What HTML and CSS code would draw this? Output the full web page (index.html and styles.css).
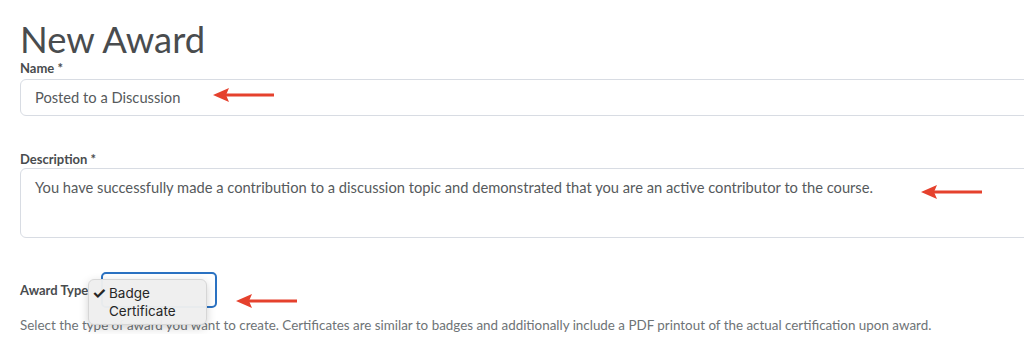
FILE: index.html
```html
<!DOCTYPE html>
<html lang="en">
<head>
  <meta charset="UTF-8" />
  <title>New Award</title>
  <link rel="stylesheet" href="styles.css">
</head>
<body>
  <main class="page">
    <h1 class="page-title">New Award</h1>

    <div class="field field-name">
      <label class="field-label">Name *</label>
      <div class="text-input">Posted to a Discussion</div>
      <svg class="arrow arrow-name" width="62" height="16" viewBox="0 0 62 16">
        <polygon points="0,8 16,1 13,8 16,15" />
        <rect x="13" y="6.5" width="48" height="3" />
      </svg>
    </div>

    <div class="field field-desc">
      <label class="field-label">Description *</label>
      <div class="text-area">You have successfully made a contribution to a discussion topic and demonstrated that you are an active contributor to the course.</div>
      <svg class="arrow arrow-desc" width="62" height="16" viewBox="0 0 62 16">
        <polygon points="0,8 16,1 13,8 16,15" />
        <rect x="13" y="6.5" width="48" height="3" />
      </svg>
    </div>

    <div class="field field-type">
      <div class="type-row">
        <label class="field-label">Award Type</label>
        <div class="select-box"></div>
        <svg class="arrow arrow-type" width="62" height="16" viewBox="0 0 62 16">
          <polygon points="0,8 16,1 13,8 16,15" />
          <rect x="13" y="6.5" width="48" height="3" />
        </svg>
      </div>
      <ul class="select-menu">
        <li class="menu-item selected"><span class="check">&#10003;</span>Badge</li>
        <li class="menu-item"><span class="check"></span>Certificate</li>
      </ul>
      <p class="help-text">Select the type of award you want to create. Certificates are similar to badges and additionally include a PDF printout of the actual certification upon award.</p>
    </div>
  </main>
</body>
</html>
```

FILE: styles.css
```css
html, body {
  margin: 0;
  padding: 0;
  background: #ffffff;
  font-family: Lato, "Open Sans", sans-serif;
  color: #494c4e;
  overflow: hidden;
}

.page {
  padding: 19px 0 0 20px;
  overflow: hidden;
}

.page-title {
  margin: 0;
  font-size: 36.4px;
  line-height: 40px;
  font-weight: 400;
  color: #494c4e;
}

.field {
  position: relative;
}

.field-label {
  display: block;
  font-size: 13px;
  line-height: 16px;
  font-weight: 700;
  color: #494c4e;
}

.field-name {
  margin-top: 1px;
}

.field-name .text-input {
  margin-top: 3px;
}

.text-input,
.text-area {
  box-sizing: border-box;
  width: 1040px;
  border: 1px solid #d8dce3;
  border-radius: 6px;
  padding: 7px 14px;
  font-size: 14.7px;
  line-height: 21px;
  color: #565a5c;
}

.text-input {
  height: 37px;
}

.field-desc {
  margin-top: 35px;
}

.text-area {
  margin-top: 1px;
  height: 70px;
  padding-top: 8px;
}

.field-type {
  margin-top: 34px;
}

.type-row {
  display: flex;
  align-items: center;
}

.select-box {
  box-sizing: border-box;
  width: 116px;
  height: 36px;
  margin-left: 13px;
  border: 2px solid #2b72c2;
  border-radius: 5px;
}

.arrow {
  position: absolute;
  fill: #e5412d;
}

.arrow-name {
  left: 193px;
  top: 27px;
}

.arrow-desc {
  left: 901px;
  top: 33px;
}

.arrow-type {
  left: 216px;
  top: 21px;
}

.select-menu {
  position: absolute;
  left: 68px;
  top: 7px;
  width: 119px;
  margin: 0;
  padding: 4px 0;
  list-style: none;
  box-sizing: border-box;
  background: rgba(238, 238, 238, 0.97);
  border: 1px solid #d6d6d6;
  border-radius: 6px;
  box-shadow: 0 3px 10px rgba(0, 0, 0, 0.18);
  font-family: Inter, "Liberation Sans", sans-serif;
  font-size: 13.5px;
  line-height: 18px;
  color: #262626;
}

.menu-item {
  display: flex;
  align-items: center;
  padding: 0 6px 0 3px;
}

.check {
  display: inline-block;
  width: 17px;
  font-size: 16px;
  font-weight: 700;
}

.help-text {
  margin: 8px 0 0;
  font-size: 13.4px;
  line-height: 18px;
  color: #6e7376;
  white-space: nowrap;
}
```
